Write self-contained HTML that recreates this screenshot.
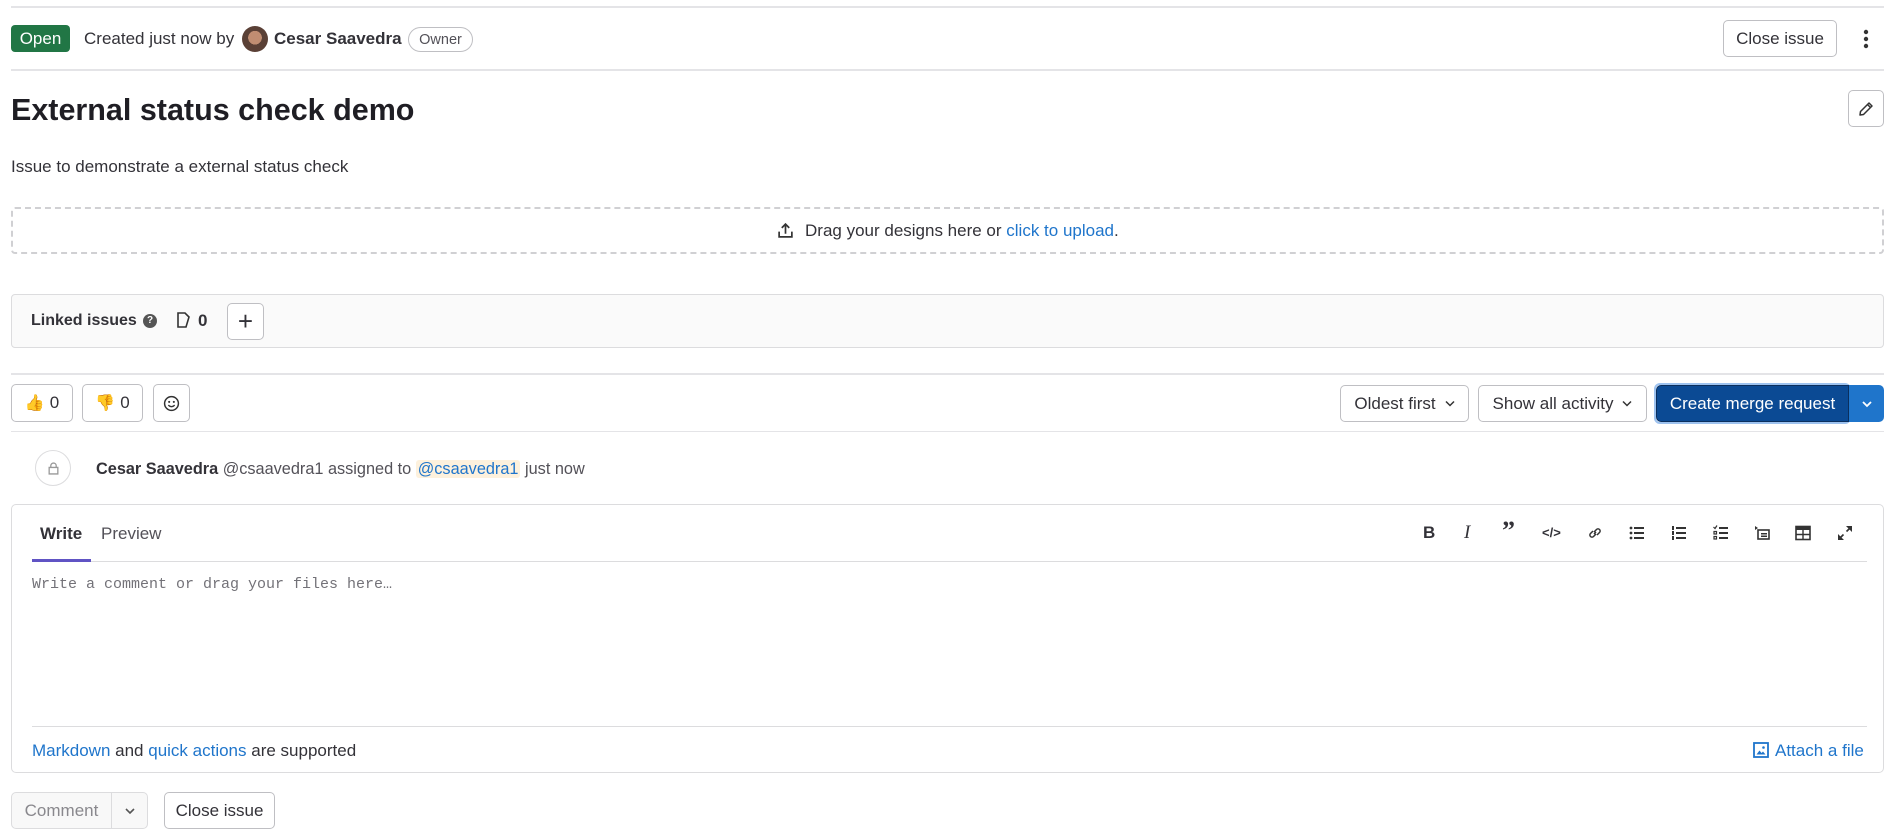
<!DOCTYPE html>
<html><head><meta charset="utf-8"><style>
*{box-sizing:border-box;margin:0;padding:0}
body{width:1900px;height:838px;background:#fff;font-family:"Liberation Sans",sans-serif;color:#333238;position:relative;overflow:hidden;font-size:17px}
.a{position:absolute;white-space:nowrap}
.hr{position:absolute;left:11px;width:1873px;height:2px;background:#e4e4e7}
.btn{position:absolute;border:1px solid #bfbfc3;border-radius:5px;background:#fff;display:flex;align-items:center;justify-content:center;font-size:17px;color:#333238;white-space:nowrap}
.lnk{color:#1f75cb}
svg{display:block}
</style></head><body>
<div class="hr" style="top:6px"></div>
<div class="a" style="left:11px;top:25px;width:59px;height:27px;background:#217645;color:#fff;border-radius:4px;display:flex;align-items:center;justify-content:center;font-size:17px">Open</div>
<div class="a" style="left:84px;top:29px">Created just now by</div>
<div class="a" style="left:242px;top:26px;width:26px;height:26px;border-radius:50%;background:radial-gradient(circle at 50% 45%,#c08d72 0 35%,#5a4036 36% 100%)"></div>
<div class="a" style="left:274px;top:29px;font-weight:bold">Cesar Saavedra</div>
<div class="a" style="left:408px;top:27px;width:65px;height:25px;border:1px solid #bfbfc3;border-radius:13px;font-size:14.5px;display:flex;align-items:center;justify-content:center;color:#535158">Owner</div>
<div class="btn" style="left:1723px;top:20px;width:114px;height:37px">Close issue</div>
<svg class="a" style="left:1860px;top:28px" width="12" height="22"><circle cx="6" cy="4" r="2.2" fill="#333"/><circle cx="6" cy="11" r="2.2" fill="#333"/><circle cx="6" cy="18" r="2.2" fill="#333"/></svg>
<div class="hr" style="top:69px"></div>
<div class="a" style="left:11px;top:93px;font-size:30.5px;font-weight:bold;color:#1f1e24">External status check demo</div>
<div class="btn" style="left:1848px;top:90px;width:36px;height:37px"><svg width="16" height="16" viewBox="0 0 16 16"><path d="M11 2l3 3-8.5 8.5L2 14l.5-3.5z M9.5 3.5l3 3" fill="none" stroke="#333" stroke-width="1.5" stroke-linejoin="round"/></svg></div>
<div class="a" style="left:11px;top:157px">Issue to demonstrate a external status check</div>
<div class="a" style="left:11px;top:207px;width:1873px;height:47px;border:2px dashed #d0d0d3;border-radius:4px"></div>
<svg class="a" style="left:777px;top:222px" width="17" height="17" viewBox="0 0 16 16"><path d="M8 11V2M4.5 5.5L8 2l3.5 3.5M2 9v5h12V9" fill="none" stroke="#333" stroke-width="1.6"/></svg>
<div class="a" style="left:805px;top:221px">Drag your designs here or <span class="lnk">click to upload</span>.</div>
<div class="a" style="left:11px;top:294px;width:1873px;height:54px;border:1px solid #dcdcde;border-radius:4px;background:#fafafa"></div>
<div class="a" style="left:31px;top:312px;font-weight:bold;font-size:16px">Linked issues</div>
<div class="a" style="left:143px;top:314px;width:14px;height:14px;border-radius:50%;background:#555;color:#fff;font-size:10px;font-weight:bold;text-align:center;line-height:14px">?</div>
<svg class="a" style="left:177px;top:312px" width="14" height="17" viewBox="0 0 14 17"><path d="M1 1h7l4 4-3 10H1z" fill="none" stroke="#333" stroke-width="1.6"/></svg>
<div class="a" style="left:198px;top:311px;font-weight:bold">0</div>
<div class="btn" style="left:227px;top:303px;width:37px;height:37px;font-size:26px;font-weight:300">+</div>
<div class="hr" style="top:373px"></div>
<div class="btn" style="left:11px;top:384px;width:62px;height:38px;gap:5px"><span style="font-size:16px">👍</span>0</div>
<div class="btn" style="left:82px;top:384px;width:61px;height:38px;gap:5px"><span style="font-size:16px">👎</span>0</div>
<div class="btn" style="left:153px;top:384px;width:37px;height:38px"><svg width="17" height="17" viewBox="0 0 16 16"><circle cx="8" cy="8" r="6.5" fill="none" stroke="#333" stroke-width="1.4"/><circle cx="5.8" cy="6.5" r="1" fill="#333"/><circle cx="10.2" cy="6.5" r="1" fill="#333"/><path d="M5 9.5q3 3 6 0" fill="none" stroke="#333" stroke-width="1.3"/></svg></div>
<div class="btn" style="left:1340px;top:385px;width:129px;height:37px;gap:9px">Oldest first<svg width="10" height="7"><path d="M1 1.5l4 4 4-4" fill="none" stroke="#333" stroke-width="1.5"/></svg></div>
<div class="btn" style="left:1478px;top:385px;width:169px;height:37px;gap:9px">Show all activity<svg width="10" height="7"><path d="M1 1.5l4 4 4-4" fill="none" stroke="#333" stroke-width="1.5"/></svg></div>
<div class="a" style="left:1654px;top:383px;width:197px;height:41px;border:2px solid #9dc2ef;border-radius:6px"></div>
<div class="a" style="left:1656px;top:385px;width:193px;height:37px;background:#0b4a94;border:1px solid #0a2f5e;border-radius:5px 0 0 5px;color:#fff;display:flex;align-items:center;justify-content:center">Create merge request</div>
<div class="a" style="left:1849px;top:385px;width:35px;height:37px;background:#1f75cb;border-radius:0 5px 5px 0;display:flex;align-items:center;justify-content:center"><svg width="10" height="8"><path d="M1 2l4 4 4-4" fill="none" stroke="#fff" stroke-width="1.8"/></svg></div>
<div class="hr" style="top:431px;height:1px"></div>
<div class="a" style="left:35px;top:450px;width:36px;height:36px;border:1px solid #dcdcde;border-radius:50%;background:#fff;display:flex;align-items:center;justify-content:center"><svg width="11" height="13" viewBox="0 0 10 12"><path d="M2.5 5V3.5a2.5 2.5 0 015 0V5M1 5h8v6H1z" fill="none" stroke="#999" stroke-width="1.2"/></svg></div>
<div class="a" style="left:96px;top:460px;font-size:16.3px"><b>Cesar Saavedra</b> <span style="color:#535158">@csaavedra1 assigned to</span> <span class="lnk" style="background:#fdf1dd;padding:0 2px;border-radius:3px">@csaavedra1</span> <span style="color:#535158">just now</span></div>
<div class="a" style="left:11px;top:504px;width:1873px;height:269px;border:1px solid #dcdcde;border-radius:5px"></div>
<div class="a" style="left:40px;top:524px;font-weight:bold">Write</div>
<div class="a" style="left:101px;top:524px;color:#535158">Preview</div>
<div class="a" style="left:32px;top:561px;width:1835px;height:1px;background:#dcdcde"></div>
<div class="a" style="left:32px;top:559px;width:59px;height:3px;background:#6053c4"></div>
<div class="a" style="left:1423px;top:523px;font-weight:bold;font-size:17px">B</div>
<div class="a" style="left:1464px;top:522px;font-style:italic;font-family:'Liberation Serif',serif;font-size:19px">I</div>
<div class="a" style="left:1502px;top:518px;font-weight:bold;font-size:26px;font-family:'Liberation Serif',serif;line-height:1">”</div>
<div class="a" style="left:1542px;top:525px;font-size:13px;font-weight:bold">&lt;/&gt;</div>
<svg class="a" style="left:1587px;top:525px" width="16" height="16" viewBox="0 0 16 16"><path d="M7 9l2-2M6 6l-2.5 2.5a2 2 0 003 3L9 9M10 10l2.5-2.5a2 2 0 00-3-3L7 7" fill="none" stroke="#333" stroke-width="1.5"/></svg>
<svg class="a" style="left:1629px;top:525px" width="16" height="16" viewBox="0 0 16 16"><g fill="#333"><circle cx="2" cy="3" r="1.4"/><circle cx="2" cy="8" r="1.4"/><circle cx="2" cy="13" r="1.4"/><rect x="5" y="2" width="10" height="2"/><rect x="5" y="7" width="10" height="2"/><rect x="5" y="12" width="10" height="2"/></g></svg>
<svg class="a" style="left:1671px;top:525px" width="16" height="16" viewBox="0 0 16 16"><g fill="#333"><rect x="1" y="1" width="2" height="4"/><rect x="1" y="6" width="2" height="4"/><rect x="1" y="11" width="2" height="4"/><rect x="5" y="2" width="10" height="2"/><rect x="5" y="7" width="10" height="2"/><rect x="5" y="12" width="10" height="2"/></g></svg>
<svg class="a" style="left:1713px;top:525px" width="16" height="16" viewBox="0 0 16 16"><g fill="none" stroke="#333" stroke-width="1.2"><path d="M0.5 2l1.5 1.5L4 0.5"/><rect x="1" y="6.5" width="2.5" height="2.5"/><rect x="1" y="11.5" width="2.5" height="2.5"/></g><g fill="#333"><rect x="6" y="2" width="9" height="2"/><rect x="6" y="7" width="9" height="2"/><rect x="6" y="12" width="9" height="2"/></g></svg>
<svg class="a" style="left:1754px;top:525px" width="16" height="16" viewBox="0 0 16 16"><path d="M1 1l3 2-3 2z" fill="#333"/><rect x="4" y="5" width="11" height="9" fill="none" stroke="#333" stroke-width="1.6"/><rect x="7" y="8" width="6" height="1.5" fill="#333"/><rect x="7" y="10.5" width="6" height="1.5" fill="#333"/></svg>
<svg class="a" style="left:1795px;top:525px" width="16" height="16" viewBox="0 0 16 16"><rect x="1" y="1.5" width="14" height="13" fill="none" stroke="#333" stroke-width="1.6"/><rect x="1" y="1.5" width="14" height="3.5" fill="#333"/><path d="M1 9.5h14M8 5v9" stroke="#333" stroke-width="1.4"/></svg>
<svg class="a" style="left:1837px;top:525px" width="16" height="16" viewBox="0 0 16 16"><path d="M9 1h6v6zM7 15H1V9z" fill="#333"/><path d="M13 3L9.5 6.5M3 13l3.5-3.5" stroke="#333" stroke-width="1.6"/></svg>
<div class="a" style="left:32px;top:576px;font-family:'Liberation Mono',monospace;font-size:15px;color:#737278">Write a comment or drag your files here…</div>
<div class="a" style="left:32px;top:726px;width:1835px;height:1px;background:#dcdcde"></div>
<div class="a" style="left:32px;top:741px"><span class="lnk">Markdown</span> and <span class="lnk">quick actions</span> are supported</div>
<svg class="a" style="left:1753px;top:742px" width="16" height="16" viewBox="0 0 16 16"><rect x="1" y="1" width="14" height="14" fill="none" stroke="#1f75cb" stroke-width="1.8"/><path d="M3.5 12.5l3-4 2 2.5 1.5-1.5 2.5 3z" fill="#1f75cb"/><circle cx="10.5" cy="5.5" r="1.3" fill="#1f75cb"/></svg>
<div class="a lnk" style="left:1775px;top:741px">Attach a file</div>
<div class="a" style="left:11px;top:792px;width:137px;height:37px;border:1px solid #dcdcde;border-radius:5px;background:#f8f8f8;display:flex;color:#89888d">
<div style="width:100px;display:flex;align-items:center;justify-content:center;border-right:1px solid #dcdcde">Comment</div>
<div style="flex:1;display:flex;align-items:center;justify-content:center"><svg width="10" height="8"><path d="M1 2l4 4 4-4" fill="none" stroke="#555" stroke-width="1.6"/></svg></div></div>
<div class="btn" style="left:164px;top:792px;width:111px;height:37px">Close issue</div>
</body></html>
